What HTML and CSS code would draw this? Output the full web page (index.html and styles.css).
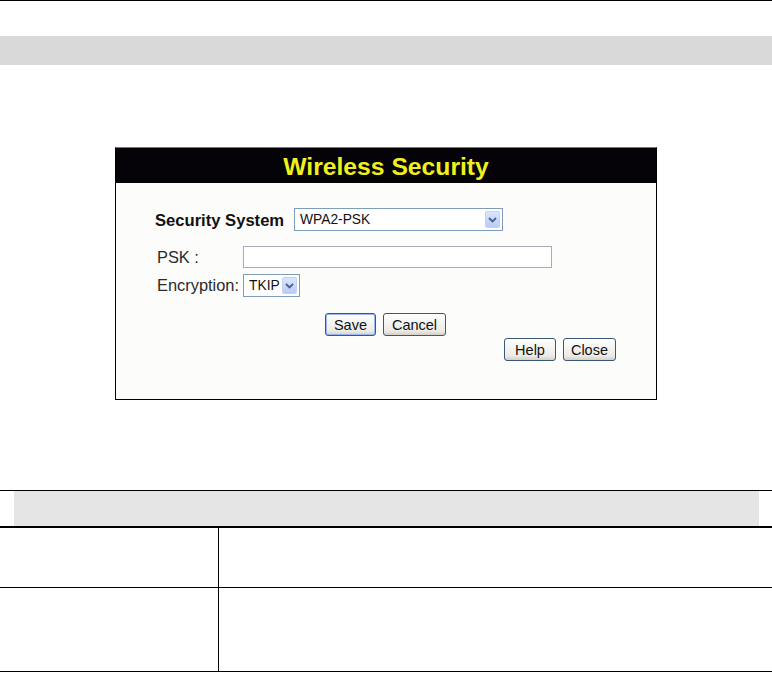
FILE: index.html
```html
<!DOCTYPE html>
<html>
<head>
<meta charset="utf-8">
<link rel="stylesheet" href="styles.css">
</head>
<body>
<div class="page">
  <div class="topline"></div>
  <div class="graybar"></div>
  <div class="shot">
    <div class="shot-title">Wireless Security</div>
    <div class="shot-body">
      <div class="row row-sec">
        <span class="lbl-bold">Security System</span>
        <span class="select sel-wide"><span class="sel-text">WPA2-PSK</span><span class="sel-btn"><svg width="9" height="6" viewBox="0 0 9 6"><path d="M1 1 L4.5 4.5 L8 1" fill="none" stroke="#4d6185" stroke-width="1.8"/></svg></span></span>
      </div>
      <div class="row row-psk">
        <span class="lbl">PSK :</span>
        <span class="input"></span>
      </div>
      <div class="row row-enc">
        <span class="lbl">Encryption:</span>
        <span class="select sel-small"><span class="sel-text">TKIP</span><span class="sel-btn"><svg width="9" height="6" viewBox="0 0 9 6"><path d="M1 1 L4.5 4.5 L8 1" fill="none" stroke="#4d6185" stroke-width="1.8"/></svg></span></span>
      </div>
      <div class="btnrow center">
        <span class="btn btn-focus">Save</span>
        <span class="btn">Cancel</span>
      </div>
      <div class="btnrow right">
        <span class="btn btn-help">Help</span>
        <span class="btn btn-close">Close</span>
      </div>
    </div>
  </div>
  <div class="table">
    <div class="thead"><div class="thead-fill"></div></div>
    <div class="trow r1"><div class="c1"></div><div class="c2"></div></div>
    <div class="trow r2"><div class="c1"></div><div class="c2"></div></div>
  </div>
</div>
</body>
</html>
```
FILE: styles.css
```css
html, body {
  margin: 0;
  padding: 0;
  background: #fff;
}
body {
  font-family: "Liberation Sans", Arial, sans-serif;
  width: 772px;
  height: 673px;
  overflow: hidden;
}
.page {
  display: flex;
  flex-direction: column;
}
.topline {
  height: 1px;
  background: #000;
}
.graybar {
  margin-top: 35px;
  height: 29px;
  background: #d9d9d9;
}
.shot {
  margin-top: 82px;
  margin-left: 115px;
  width: 540px;
  height: 251px;
  border: 1px solid #000;
  border-top-color: #777;
  background: #fcfdfa;
  display: flex;
  flex-direction: column;
}
.shot-title {
  height: 35px;
  background: #050307;
  color: #f0f01e;
  font-weight: bold;
  font-size: 24.7px;
  line-height: 37px;
  text-align: center;
}
.shot-body {
  padding: 25px 40px 0 39px;
  display: flex;
  flex-direction: column;
}
.row {
  display: flex;
  align-items: center;
}
.lbl-bold {
  font-weight: bold;
  font-size: 16.6px;
  color: #111;
  width: 139px;
  margin-top: 3px;
  white-space: nowrap;
}
.lbl {
  font-size: 16.4px;
  color: #2a2a2a;
  width: 86px;
  padding-left: 2px;
  white-space: nowrap;
}
.row-psk { margin-top: 15px; }
.row-enc { margin-top: 6px; }
.select {
  display: flex;
  align-items: center;
  justify-content: space-between;
  border: 1px solid #7f9db9;
  background: #fff;
  height: 21px;
  box-sizing: content-box;
  font-size: 13.8px;
  color: #111;
}
.sel-wide { width: 207px; }
.sel-small { width: 55px; }
.sel-text { padding-left: 5px; }
.sel-btn {
  width: 15px;
  height: 17px;
  margin-right: 2px;
  background: linear-gradient(#dbe6fe, #b9cbf8);
  border: 1px solid #c3d1f2;
  box-sizing: border-box;
  border-radius: 2px;
  display: flex;
  align-items: center;
  justify-content: center;
}
.input {
  width: 307px;
  height: 20px;
  border: 1px solid #a5acb5;
  background: #fff;
}
.btnrow {
  display: flex;
  gap: 7px;
}
.btnrow.center {
  justify-content: center;
  margin-top: 16px;
}
.btnrow.right {
  justify-content: flex-end;
  margin-top: 2px;
}
.btn {
  display: inline-flex;
  align-items: center;
  justify-content: center;
  height: 21px;
  padding: 0 8px;
  border: 1px solid #3b5876;
  border-radius: 3px;
  background: linear-gradient(#ffffff, #ecebe6 80%, #d6d0c5);
  font-size: 14.5px;
  color: #111;
}
.btn-help { padding: 0 10px; }
.btn-close { padding: 0 7px; }
.btn-focus {
  box-shadow: inset 0 0 0 1px #9bb7ef;
}
.table {
  margin-top: 90px;
  display: flex;
  flex-direction: column;
}
.thead {
  border-top: 1px solid #000;
  border-bottom: 2px solid #000;
  height: 35px;
  padding: 0 13px 0 14px;
}
.thead-fill {
  height: 100%;
  background: #e5e5e5;
}
.trow {
  display: grid;
  grid-template-columns: 219px 1fr;
  border-bottom: 1px solid #000;
}
.trow .c1 {
  border-right: 1px solid #000;
}
.r1 { height: 59px; }
.r2 { height: 83px; }
```
